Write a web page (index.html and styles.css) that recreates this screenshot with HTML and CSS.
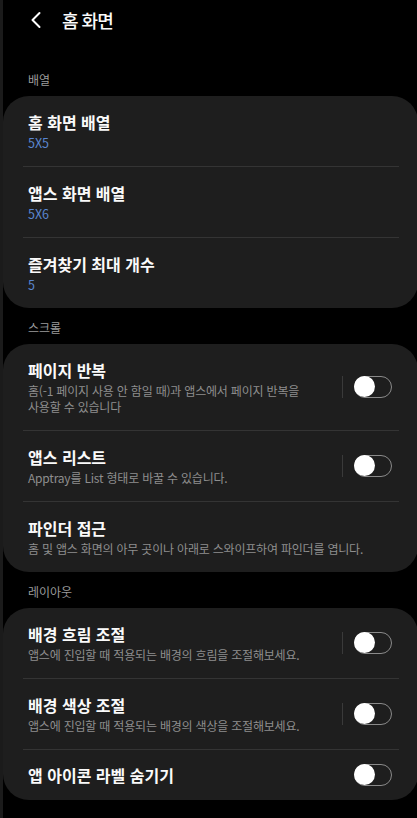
FILE: index.html
```html
<!DOCTYPE html>
<html lang="ko">
<head>
  <meta charset="UTF-8" />
  <meta name="viewport" content="width=device-width, initial-scale=1.0"/>
  <title>홈 화면</title>
  <link rel="stylesheet" href="styles.css">
</head>
<body>
  <div class="page">

    <header class="topbar">
      <button class="back" aria-label="뒤로">
        <svg width="12" height="18" viewBox="0 0 12 18"><path d="M9.5 2 L2.5 9 L9.5 16" fill="none" stroke="#fff" stroke-width="2" stroke-linecap="round" stroke-linejoin="round"/></svg>
      </button>
      <h1>홈 화면</h1>
    </header>

    <div class="section-label">배열</div>
    <div class="card">
      <div class="row">
        <div class="text">
          <div class="title">홈 화면 배열</div>
          <div class="value">5X5</div>
        </div>
      </div>
      <div class="divider"></div>
      <div class="row">
        <div class="text">
          <div class="title">앱스 화면 배열</div>
          <div class="value">5X6</div>
        </div>
      </div>
      <div class="divider"></div>
      <div class="row">
        <div class="text">
          <div class="title">즐겨찾기 최대 개수</div>
          <div class="value">5</div>
        </div>
      </div>
    </div>

    <div class="section-label">스크롤</div>
    <div class="card">
      <div class="row">
        <div class="text">
          <div class="title">페이지 반복</div>
          <div class="desc">홈(-1 페이지 사용 안 함일 때)과 앱스에서 페이지 반복을<br>사용할 수 있습니다</div>
        </div>
        <span class="vline"></span>
        <span class="switch"><span class="knob"></span></span>
      </div>
      <div class="divider"></div>
      <div class="row">
        <div class="text">
          <div class="title">앱스 리스트</div>
          <div class="desc">Apptray를 List 형태로 바꿀 수 있습니다.</div>
        </div>
        <span class="vline"></span>
        <span class="switch"><span class="knob"></span></span>
      </div>
      <div class="divider"></div>
      <div class="row">
        <div class="text wide">
          <div class="title">파인더 접근</div>
          <div class="desc">홈 및 앱스 화면의 아무 곳이나 아래로 스와이프하여 파인더를 엽니다.</div>
        </div>
      </div>
    </div>

    <div class="section-label">레이아웃</div>
    <div class="card">
      <div class="row">
        <div class="text">
          <div class="title">배경 흐림 조절</div>
          <div class="desc">앱스에 진입할 때 적용되는 배경의 흐림을 조절해보세요.</div>
        </div>
        <span class="vline"></span>
        <span class="switch"><span class="knob"></span></span>
      </div>
      <div class="divider"></div>
      <div class="row">
        <div class="text">
          <div class="title">배경 색상 조절</div>
          <div class="desc">앱스에 진입할 때 적용되는 배경의 색상을 조절해보세요.</div>
        </div>
        <span class="vline"></span>
        <span class="switch"><span class="knob"></span></span>
      </div>
      <div class="divider"></div>
      <div class="row single">
        <div class="text">
          <div class="title">앱 아이콘 라벨 숨기기</div>
        </div>
        <span class="switch"><span class="knob"></span></span>
      </div>
    </div>

  </div>
</body>
</html>
```

FILE: styles.css
```css
* { box-sizing: border-box; margin: 0; padding: 0; }

body {
  font-family: "Noto Sans CJK KR", "Noto Sans", sans-serif;
  background: #000;
  color: #fafafa;
  height: 818px;
  overflow: hidden;
}

.page {
  border-left: 3px solid #1b1b1b;
  min-height: 818px;
}

/* top bar */
.topbar {
  height: 60px;
  display: flex;
  align-items: flex-start;
  padding: 8px 0 0 27px;
  gap: 20px;
}

.back {
  background: none;
  border: none;
  height: 24px;
  display: flex;
  align-items: center;
}

.topbar h1 {
  font-size: 18px;
  line-height: 24px;
  font-weight: 500;
  letter-spacing: -1px;
}

/* sections */
.section-label {
  padding: 12px 25px 8px;
  font-size: 12px;
  line-height: 16px;
  color: #9b9b9b;
}

.card {
  background: #1e1e1e;
  border-radius: 26px;
  margin-right: -1px;
}

.row {
  display: flex;
  align-items: center;
  padding: 15px 26px 15px 25px;
}

.row.single {
  padding-top: 14px;
  padding-bottom: 14px;
}

.text {
  flex: 1;
  min-width: 0;
  padding-right: 12px;
}

.text.wide { padding-right: 0; }

.title {
  font-size: 16px;
  line-height: 22px;
  font-weight: 700;
}

.value {
  margin-top: 2px;
  font-size: 12.5px;
  line-height: 16px;
  color: #5a86d0;
}

.desc {
  margin-top: 2px;
  font-size: 12px;
  line-height: 16px;
  color: #8e8e8e;
  letter-spacing: -0.2px;
  white-space: nowrap;
}

.divider {
  height: 1px;
  background: #343434;
  margin: 0 19px 0 20px;
}

/* toggle */
.vline {
  width: 1px;
  height: 22px;
  background: #3a3a3a;
  margin-right: 11px;
}

.switch {
  position: relative;
  width: 38px;
  height: 22px;
  border: 1.5px solid #8a8a8a;
  border-radius: 11px;
  flex-shrink: 0;
}

.knob {
  position: absolute;
  left: -1.5px;
  top: -1px;
  width: 21px;
  height: 21px;
  border-radius: 50%;
  background: #fff;
}
```
